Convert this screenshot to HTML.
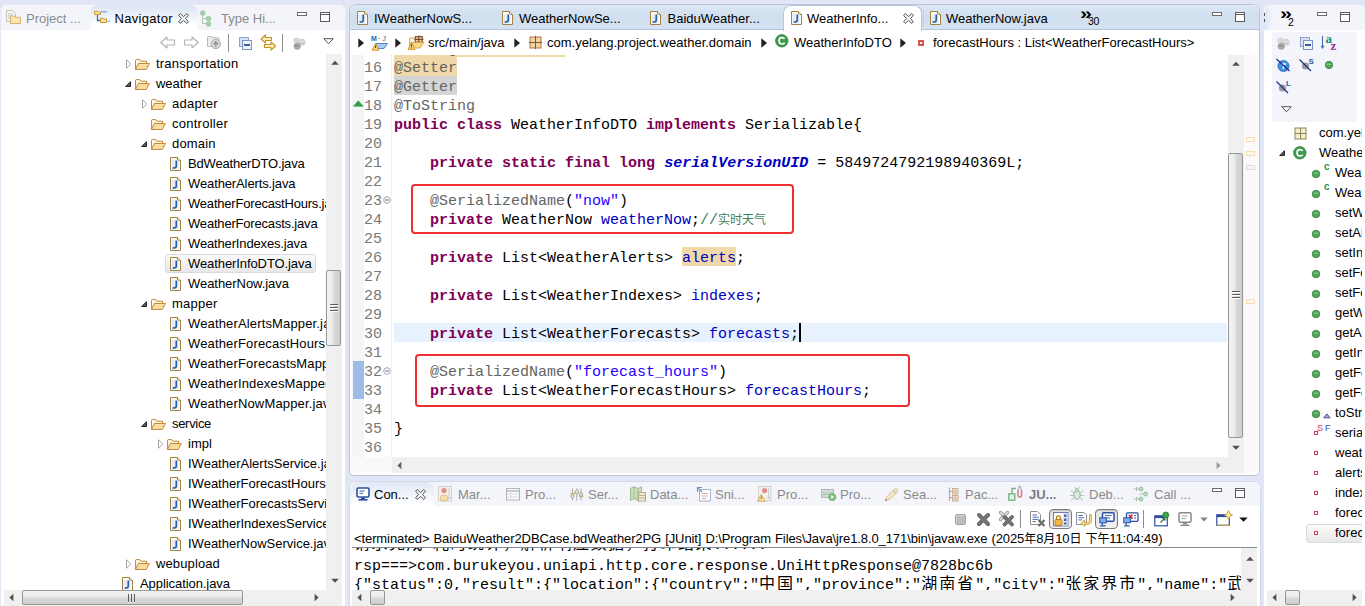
<!DOCTYPE html>
<html><head><meta charset="utf-8"><title>Eclipse</title>
<style>
html,body{margin:0;padding:0}
body{width:1365px;height:606px;overflow:hidden;position:relative;background:#e1e6f6;font-family:"Liberation Sans","Noto Sans CJK SC",sans-serif;font-size:13px;color:#000}
.i{position:absolute;overflow:visible}
.t{position:absolute;white-space:nowrap;line-height:16px;font-size:13px}
.g{color:#8a8a8a}
.panel{position:absolute;background:#fff;border:1px solid #c9cfe3;border-radius:7px 7px 0 0;box-sizing:border-box}
.tabbar{position:absolute;background:#f4f5fb;border-radius:6px 6px 0 0}
.atab{position:absolute;background:linear-gradient(#e9eff8,#fff);border-radius:8px 8px 0 0}
.sel{position:absolute;box-sizing:border-box;border:1px solid #dadada;border-radius:3px;background:linear-gradient(#fbfbfb,#e8e8e8)}
.m{position:absolute;white-space:pre;font-family:"Liberation Mono","Noto Sans CJK SC",monospace;font-size:15px;line-height:19px}
.trk{position:absolute;background:#f0f0f0}
.vth{position:absolute;box-sizing:border-box;border:1px solid #979797;border-radius:2px;background:linear-gradient(90deg,#f4f4f4 0%,#eaeaea 45%,#d8d8d8 55%,#cfcfcf 100%)}
.hth{position:absolute;box-sizing:border-box;border:1px solid #979797;border-radius:2px;background:linear-gradient(180deg,#f4f4f4 0%,#eaeaea 45%,#d8d8d8 55%,#cfcfcf 100%)}
.grip{position:absolute;background:#5c5c5c;box-shadow:0 1px 0 #fff}
.ln{color:#787878}
.k{color:#7f0055;font-weight:bold}
.f{color:#0000c0}
.sf{color:#0000c0;font-style:italic;font-weight:bold}
.s{color:#2a00ff}
.a{color:#646464}
.c{color:#3f7f5f}
.cj{font-family:"Noto Sans CJK SC",sans-serif;font-size:12px;line-height:0}
.rb{position:absolute;box-sizing:border-box;border:2px solid #ee3030;border-radius:4px}
.cc{font-family:"Noto Sans CJK SC",sans-serif;font-size:16px;letter-spacing:2px;line-height:0}

</style></head><body>
<div class="panel" style="left:0px;top:4px;width:346px;height:610px;border-color:#e4e7f3"></div>
<div class="tabbar" style="left:1px;top:5px;width:344px;height:25px"></div>
<div class="atab" style="left:90px;top:5px;width:108px;height:25px;background:linear-gradient(#d9e4f2,#eef3fa 45%,#fff 85%)"></div>
<svg class="i" style="left:5px;top:9px" width="17" height="17" viewBox="0 0 17 17" ><path d="M1.5 1.5H7.5L10.5 4.5V12.5H1.5Z" fill="#f4f4ee" stroke="#c9c4b0"/><path d="M3 5H8M3 7H8M3 9H6" stroke="#b9c6df" stroke-width="1"/><path d="M5.5 14.5V7.7C5.5 7.2 5.8 7 6.2 7H9.3L10.3 8.3H14.8C15.2 8.3 15.5 8.6 15.5 9V14.5Z" fill="#fbe7ae" stroke="#d6b071"/></svg>
<div class="t g" style="left:26px;top:11px">Project ...</div>
<svg class="i" style="left:94px;top:10px" width="16" height="14" viewBox="0 0 16 14" ><path d="M0.5 4.5V1.2H3L3.8 2H6.5V4.5Z" fill="#fbe39a" stroke="#c89a3a"/><path d="M3.5 5V10.5H6" fill="none" stroke="#4a69b5" stroke-width="1.3"/><path d="M7 1.8H13" stroke="#7da1e0" stroke-width="1.2"/><path d="M6.5 12.5V8.2H9L9.8 9H12.5V12.5Z" fill="#fbe39a" stroke="#c89a3a"/><path d="M13.5 11.3H16" stroke="#7da1e0" stroke-width="1.2"/></svg>
<div class="t" style="left:114.5px;top:11px;letter-spacing:0.3px">Navigator</div>
<svg class="i" style="left:178px;top:12.5px" width="11" height="11" viewBox="0 0 11 11" ><path d="M0.6 2.2L2.2 0.6L5.5 3.6L8.8 0.6L10.4 2.2L7.4 5.5L10.4 8.8L8.8 10.4L5.5 7.4L2.2 10.4L0.6 8.8L3.6 5.5Z" fill="#fff" stroke="#4a4a4a" stroke-width="1" stroke-linejoin="round"/></svg>
<svg class="i" style="left:200px;top:10px" width="12" height="18" viewBox="0 0 12 18" ><g opacity=".65"><path d="M2.5 4V13.5H7M2.5 8.5H7" fill="none" stroke="#9ab09a" stroke-width="1.2"/><circle cx="2.8" cy="3" r="2.2" fill="#7fc77f" stroke="#4f9a4f" stroke-width="0.8"/><circle cx="8.5" cy="8.5" r="2.2" fill="#7fc77f" stroke="#4f9a4f" stroke-width="0.8"/><circle cx="8.5" cy="14" r="2.2" fill="#7fc77f" stroke="#4f9a4f" stroke-width="0.8"/></g></svg>
<div class="t g" style="left:221px;top:11px">Type Hi...</div>
<div style="position:absolute;left:297px;top:12px;width:8px;height:2px;border:1px solid #6a6a6a;background:#fff;box-sizing:content-box"></div><div style="position:absolute;left:320px;top:12px;width:8px;height:8px;border:1px solid #5c5c5c;background:linear-gradient(#fff 0,#fff 1px,#5c5c5c 1px,#5c5c5c 2px,#fff 2px);box-sizing:content-box"></div>
<div style="position:absolute;left:1px;top:30px;width:344px;height:24px;background:#fff"></div>
<svg class="i" style="left:160px;top:36px" width="16" height="13" viewBox="0 0 16 13" ><path d="M0.8 6.5L7 1V4H14.5V9H7V12Z" fill="#fff" stroke="#b4b4b4" stroke-width="1.1" stroke-linejoin="round"/></svg>
<svg class="i" style="left:183px;top:36px" width="16" height="13" viewBox="0 0 16 13" ><path d="M15.2 6.5L9 1V4H1.5V9H9V12Z" fill="#fff" stroke="#b4b4b4" stroke-width="1.1" stroke-linejoin="round"/></svg>
<svg class="i" style="left:207px;top:35px" width="15" height="15" viewBox="0 0 15 15" ><path d="M0.5 11.5V2.2C0.5 1.8 0.8 1.5 1.2 1.5H4.5L5.6 2.8H11.2C11.6 2.8 12 3.1 12 3.5V11.5Z" fill="#ececec" stroke="#b9b9b9"/><circle cx="8.8" cy="9" r="4.6" fill="#d9d9d9" stroke="#aaa"/><path d="M8.8 12V8M6.6 9L8.8 6.3L11 9Z" fill="#8e8e8e" stroke="#8e8e8e" stroke-width="1"/></svg>
<div style="position:absolute;left:228px;top:34px;width:1px;height:18px;background:#8e8e8e"></div>
<svg class="i" style="left:238px;top:36px" width="15" height="15" viewBox="0 0 15 15" ><rect x="1.5" y="1.5" width="9" height="9" fill="#d6e1f1" stroke="#8da3cb"/><rect x="4.5" y="4.5" width="9" height="9" fill="#eef6f8" stroke="#7c93c0"/><path d="M6 9H12" stroke="#1d3f8f" stroke-width="1.7"/></svg>
<svg class="i" style="left:259px;top:34px" width="18" height="18" viewBox="0 0 18 18" ><path d="M2 5L6.5 1V3.5H12.5V6.5H6.5V9Z" fill="#fdf0c0" stroke="#c99222" stroke-width="1.1" stroke-linejoin="round"/><path d="M16.5 12L12 8V10.5H5.5V13.5H12V16Z" fill="#fdf0c0" stroke="#c99222" stroke-width="1.1" stroke-linejoin="round"/></svg>
<div style="position:absolute;left:282px;top:34px;width:1px;height:18px;background:#8e8e8e"></div>
<svg class="i" style="left:292px;top:36px" width="15" height="15" viewBox="0 0 15 15" ><circle cx="4.5" cy="4.6" r="3.2" fill="#d6d6d6"/><circle cx="10.2" cy="6.2" r="3.4" fill="#d0d0d0"/><circle cx="5.2" cy="10.2" r="3.5" fill="#a9a9a9"/><path d="M2.2 9.8H8.2" stroke="#8a8a8a" stroke-width="1"/><path d="M7.5 5.4H13" stroke="#e6e6e6" stroke-width="1"/></svg>
<svg class="i" style="left:323px;top:38px" width="11" height="7" viewBox="0 0 11 7" ><path d="M0.8 0.7H10.2L5.5 5.8Z" fill="#fff" stroke="#555" stroke-width="1"/></svg>
<div id="tree" style="position:absolute;left:2px;top:54px;width:324px;height:536px;overflow:hidden;background:#fff">
<svg class="i" style="left:124px;top:5px" width="6" height="10" viewBox="0 0 6 10" ><path d="M0.5 0.8L4.8 5L0.5 9.2Z" fill="#fff" stroke="#a6a6a6"/></svg>
<svg class="i" style="left:132px;top:4px" width="17" height="13" viewBox="0 0 17 13" ><path d="M1.5 11.5V2.5C1.5 1.9 1.9 1.5 2.5 1.5H5.6L6.9 3.2H12.5V5.5" fill="#fdf3dc" stroke="#c38b3c"/><path d="M1.5 11.5L4.4 5.5H15.4L12.2 11.5Z" fill="#f9dd9f" stroke="#c38b3c" stroke-linejoin="round"/></svg>
<div class="t" style="left:154px;top:2px;letter-spacing:0.21px">transportation</div>
<svg class="i" style="left:123px;top:27px" width="6" height="6" viewBox="0 0 6 6" ><path d="M5.5 0.7V5.5H0.7Z" fill="#595959" stroke="#262626"/></svg>
<svg class="i" style="left:132px;top:24px" width="17" height="13" viewBox="0 0 17 13" ><path d="M1.5 11.5V2.5C1.5 1.9 1.9 1.5 2.5 1.5H5.6L6.9 3.2H12.5V5.5" fill="#fdf3dc" stroke="#c38b3c"/><path d="M1.5 11.5L4.4 5.5H15.4L12.2 11.5Z" fill="#f9dd9f" stroke="#c38b3c" stroke-linejoin="round"/></svg>
<div class="t" style="left:154px;top:22px;letter-spacing:-0.04px">weather</div>
<svg class="i" style="left:140px;top:45px" width="6" height="10" viewBox="0 0 6 10" ><path d="M0.5 0.8L4.8 5L0.5 9.2Z" fill="#fff" stroke="#a6a6a6"/></svg>
<svg class="i" style="left:148px;top:44px" width="17" height="13" viewBox="0 0 17 13" ><path d="M1.5 11.5V2.5C1.5 1.9 1.9 1.5 2.5 1.5H5.6L6.9 3.2H12.5V5.5" fill="#fdf3dc" stroke="#c38b3c"/><path d="M1.5 11.5L4.4 5.5H15.4L12.2 11.5Z" fill="#f9dd9f" stroke="#c38b3c" stroke-linejoin="round"/></svg>
<div class="t" style="left:170px;top:42px;letter-spacing:0.23px">adapter</div>
<svg class="i" style="left:148px;top:64px" width="17" height="13" viewBox="0 0 17 13" ><path d="M1.5 11.5V2.5C1.5 1.9 1.9 1.5 2.5 1.5H5.6L6.9 3.2H12.5V5.5" fill="#fdf3dc" stroke="#c38b3c"/><path d="M1.5 11.5L4.4 5.5H15.4L12.2 11.5Z" fill="#f9dd9f" stroke="#c38b3c" stroke-linejoin="round"/></svg>
<div class="t" style="left:170px;top:62px;letter-spacing:0.25px">controller</div>
<svg class="i" style="left:139px;top:87px" width="6" height="6" viewBox="0 0 6 6" ><path d="M5.5 0.7V5.5H0.7Z" fill="#595959" stroke="#262626"/></svg>
<svg class="i" style="left:148px;top:84px" width="17" height="13" viewBox="0 0 17 13" ><path d="M1.5 11.5V2.5C1.5 1.9 1.9 1.5 2.5 1.5H5.6L6.9 3.2H12.5V5.5" fill="#fdf3dc" stroke="#c38b3c"/><path d="M1.5 11.5L4.4 5.5H15.4L12.2 11.5Z" fill="#f9dd9f" stroke="#c38b3c" stroke-linejoin="round"/></svg>
<div class="t" style="left:170px;top:82px;letter-spacing:0.17px">domain</div>
<svg class="i" style="left:168px;top:103px" width="11" height="14" viewBox="0 0 11 14" ><path d="M0.5 0.5H7.5L10.5 3.5V13.5H0.5Z" fill="#fdfdf6" stroke="#a08440"/><path d="M7.5 0.5V3.5H10.5" fill="#f3e6b8" stroke="#a08440"/><rect x="1.5" y="3" width="7" height="9.5" fill="#e4ecf8"/><path d="M6.3 3.6V8.8C6.3 10.4 5.4 11 4.2 11C3.5 11 3 10.8 2.7 10.6" fill="none" stroke="#2a5caa" stroke-width="1.7"/></svg>
<div class="t" style="left:186px;top:102px;letter-spacing:-0.17px">BdWeatherDTO.java</div>
<svg class="i" style="left:168px;top:123px" width="11" height="14" viewBox="0 0 11 14" ><path d="M0.5 0.5H7.5L10.5 3.5V13.5H0.5Z" fill="#fdfdf6" stroke="#a08440"/><path d="M7.5 0.5V3.5H10.5" fill="#f3e6b8" stroke="#a08440"/><rect x="1.5" y="3" width="7" height="9.5" fill="#e4ecf8"/><path d="M6.3 3.6V8.8C6.3 10.4 5.4 11 4.2 11C3.5 11 3 10.8 2.7 10.6" fill="none" stroke="#2a5caa" stroke-width="1.7"/></svg>
<div class="t" style="left:186px;top:122px;letter-spacing:-0.12px">WeatherAlerts.java</div>
<svg class="i" style="left:168px;top:143px" width="11" height="14" viewBox="0 0 11 14" ><path d="M0.5 0.5H7.5L10.5 3.5V13.5H0.5Z" fill="#fdfdf6" stroke="#a08440"/><path d="M7.5 0.5V3.5H10.5" fill="#f3e6b8" stroke="#a08440"/><rect x="1.5" y="3" width="7" height="9.5" fill="#e4ecf8"/><path d="M6.3 3.6V8.8C6.3 10.4 5.4 11 4.2 11C3.5 11 3 10.8 2.7 10.6" fill="none" stroke="#2a5caa" stroke-width="1.7"/></svg>
<div class="t" style="left:186px;top:142px;letter-spacing:-0.20px">WeatherForecastHours.java</div>
<svg class="i" style="left:168px;top:163px" width="11" height="14" viewBox="0 0 11 14" ><path d="M0.5 0.5H7.5L10.5 3.5V13.5H0.5Z" fill="#fdfdf6" stroke="#a08440"/><path d="M7.5 0.5V3.5H10.5" fill="#f3e6b8" stroke="#a08440"/><rect x="1.5" y="3" width="7" height="9.5" fill="#e4ecf8"/><path d="M6.3 3.6V8.8C6.3 10.4 5.4 11 4.2 11C3.5 11 3 10.8 2.7 10.6" fill="none" stroke="#2a5caa" stroke-width="1.7"/></svg>
<div class="t" style="left:186px;top:162px;letter-spacing:-0.19px">WeatherForecasts.java</div>
<svg class="i" style="left:168px;top:183px" width="11" height="14" viewBox="0 0 11 14" ><path d="M0.5 0.5H7.5L10.5 3.5V13.5H0.5Z" fill="#fdfdf6" stroke="#a08440"/><path d="M7.5 0.5V3.5H10.5" fill="#f3e6b8" stroke="#a08440"/><rect x="1.5" y="3" width="7" height="9.5" fill="#e4ecf8"/><path d="M6.3 3.6V8.8C6.3 10.4 5.4 11 4.2 11C3.5 11 3 10.8 2.7 10.6" fill="none" stroke="#2a5caa" stroke-width="1.7"/></svg>
<div class="t" style="left:186px;top:182px;letter-spacing:-0.15px">WeatherIndexes.java</div>
<div class="sel" style="left:163px;top:200px;width:151px;height:19px"></div>
<svg class="i" style="left:168px;top:203px" width="11" height="14" viewBox="0 0 11 14" ><path d="M0.5 0.5H7.5L10.5 3.5V13.5H0.5Z" fill="#fdfdf6" stroke="#a08440"/><path d="M7.5 0.5V3.5H10.5" fill="#f3e6b8" stroke="#a08440"/><rect x="1.5" y="3" width="7" height="9.5" fill="#e4ecf8"/><path d="M6.3 3.6V8.8C6.3 10.4 5.4 11 4.2 11C3.5 11 3 10.8 2.7 10.6" fill="none" stroke="#2a5caa" stroke-width="1.7"/></svg>
<div class="t" style="left:186px;top:202px;letter-spacing:-0.09px">WeatherInfoDTO.java</div>
<svg class="i" style="left:168px;top:223px" width="11" height="14" viewBox="0 0 11 14" ><path d="M0.5 0.5H7.5L10.5 3.5V13.5H0.5Z" fill="#fdfdf6" stroke="#a08440"/><path d="M7.5 0.5V3.5H10.5" fill="#f3e6b8" stroke="#a08440"/><rect x="1.5" y="3" width="7" height="9.5" fill="#e4ecf8"/><path d="M6.3 3.6V8.8C6.3 10.4 5.4 11 4.2 11C3.5 11 3 10.8 2.7 10.6" fill="none" stroke="#2a5caa" stroke-width="1.7"/></svg>
<div class="t" style="left:186px;top:222px;letter-spacing:-0.05px">WeatherNow.java</div>
<svg class="i" style="left:139px;top:247px" width="6" height="6" viewBox="0 0 6 6" ><path d="M5.5 0.7V5.5H0.7Z" fill="#595959" stroke="#262626"/></svg>
<svg class="i" style="left:148px;top:244px" width="17" height="13" viewBox="0 0 17 13" ><path d="M1.5 11.5V2.5C1.5 1.9 1.9 1.5 2.5 1.5H5.6L6.9 3.2H12.5V5.5" fill="#fdf3dc" stroke="#c38b3c"/><path d="M1.5 11.5L4.4 5.5H15.4L12.2 11.5Z" fill="#f9dd9f" stroke="#c38b3c" stroke-linejoin="round"/></svg>
<div class="t" style="left:170px;top:242px;letter-spacing:0.27px">mapper</div>
<svg class="i" style="left:168px;top:263px" width="11" height="14" viewBox="0 0 11 14" ><path d="M0.5 0.5H7.5L10.5 3.5V13.5H0.5Z" fill="#fdfdf6" stroke="#a08440"/><path d="M7.5 0.5V3.5H10.5" fill="#f3e6b8" stroke="#a08440"/><rect x="1.5" y="3" width="7" height="9.5" fill="#e4ecf8"/><path d="M6.3 3.6V8.8C6.3 10.4 5.4 11 4.2 11C3.5 11 3 10.8 2.7 10.6" fill="none" stroke="#2a5caa" stroke-width="1.7"/></svg>
<div class="t" style="left:186px;top:262px;letter-spacing:0.15px">WeatherAlertsMapper.java</div>
<svg class="i" style="left:168px;top:283px" width="11" height="14" viewBox="0 0 11 14" ><path d="M0.5 0.5H7.5L10.5 3.5V13.5H0.5Z" fill="#fdfdf6" stroke="#a08440"/><path d="M7.5 0.5V3.5H10.5" fill="#f3e6b8" stroke="#a08440"/><rect x="1.5" y="3" width="7" height="9.5" fill="#e4ecf8"/><path d="M6.3 3.6V8.8C6.3 10.4 5.4 11 4.2 11C3.5 11 3 10.8 2.7 10.6" fill="none" stroke="#2a5caa" stroke-width="1.7"/></svg>
<div class="t" style="left:186px;top:282px;letter-spacing:0.15px">WeatherForecastHoursMapper.java</div>
<svg class="i" style="left:168px;top:303px" width="11" height="14" viewBox="0 0 11 14" ><path d="M0.5 0.5H7.5L10.5 3.5V13.5H0.5Z" fill="#fdfdf6" stroke="#a08440"/><path d="M7.5 0.5V3.5H10.5" fill="#f3e6b8" stroke="#a08440"/><rect x="1.5" y="3" width="7" height="9.5" fill="#e4ecf8"/><path d="M6.3 3.6V8.8C6.3 10.4 5.4 11 4.2 11C3.5 11 3 10.8 2.7 10.6" fill="none" stroke="#2a5caa" stroke-width="1.7"/></svg>
<div class="t" style="left:186px;top:302px;letter-spacing:0.15px">WeatherForecastsMapper.java</div>
<svg class="i" style="left:168px;top:323px" width="11" height="14" viewBox="0 0 11 14" ><path d="M0.5 0.5H7.5L10.5 3.5V13.5H0.5Z" fill="#fdfdf6" stroke="#a08440"/><path d="M7.5 0.5V3.5H10.5" fill="#f3e6b8" stroke="#a08440"/><rect x="1.5" y="3" width="7" height="9.5" fill="#e4ecf8"/><path d="M6.3 3.6V8.8C6.3 10.4 5.4 11 4.2 11C3.5 11 3 10.8 2.7 10.6" fill="none" stroke="#2a5caa" stroke-width="1.7"/></svg>
<div class="t" style="left:186px;top:322px;letter-spacing:0.15px">WeatherIndexesMapper.java</div>
<svg class="i" style="left:168px;top:343px" width="11" height="14" viewBox="0 0 11 14" ><path d="M0.5 0.5H7.5L10.5 3.5V13.5H0.5Z" fill="#fdfdf6" stroke="#a08440"/><path d="M7.5 0.5V3.5H10.5" fill="#f3e6b8" stroke="#a08440"/><rect x="1.5" y="3" width="7" height="9.5" fill="#e4ecf8"/><path d="M6.3 3.6V8.8C6.3 10.4 5.4 11 4.2 11C3.5 11 3 10.8 2.7 10.6" fill="none" stroke="#2a5caa" stroke-width="1.7"/></svg>
<div class="t" style="left:186px;top:342px;letter-spacing:0.15px">WeatherNowMapper.java</div>
<svg class="i" style="left:139px;top:367px" width="6" height="6" viewBox="0 0 6 6" ><path d="M5.5 0.7V5.5H0.7Z" fill="#595959" stroke="#262626"/></svg>
<svg class="i" style="left:148px;top:364px" width="17" height="13" viewBox="0 0 17 13" ><path d="M1.5 11.5V2.5C1.5 1.9 1.9 1.5 2.5 1.5H5.6L6.9 3.2H12.5V5.5" fill="#fdf3dc" stroke="#c38b3c"/><path d="M1.5 11.5L4.4 5.5H15.4L12.2 11.5Z" fill="#f9dd9f" stroke="#c38b3c" stroke-linejoin="round"/></svg>
<div class="t" style="left:170px;top:362px;letter-spacing:-0.31px">service</div>
<svg class="i" style="left:156px;top:385px" width="6" height="10" viewBox="0 0 6 10" ><path d="M0.5 0.8L4.8 5L0.5 9.2Z" fill="#fff" stroke="#a6a6a6"/></svg>
<svg class="i" style="left:164px;top:384px" width="17" height="13" viewBox="0 0 17 13" ><path d="M1.5 11.5V2.5C1.5 1.9 1.9 1.5 2.5 1.5H5.6L6.9 3.2H12.5V5.5" fill="#fdf3dc" stroke="#c38b3c"/><path d="M1.5 11.5L4.4 5.5H15.4L12.2 11.5Z" fill="#f9dd9f" stroke="#c38b3c" stroke-linejoin="round"/></svg>
<div class="t" style="left:186px;top:382px;letter-spacing:0.05px">impl</div>
<svg class="i" style="left:168px;top:403px" width="11" height="14" viewBox="0 0 11 14" ><path d="M0.5 0.5H7.5L10.5 3.5V13.5H0.5Z" fill="#fdfdf6" stroke="#a08440"/><path d="M7.5 0.5V3.5H10.5" fill="#f3e6b8" stroke="#a08440"/><rect x="1.5" y="3" width="7" height="9.5" fill="#e4ecf8"/><path d="M6.3 3.6V8.8C6.3 10.4 5.4 11 4.2 11C3.5 11 3 10.8 2.7 10.6" fill="none" stroke="#2a5caa" stroke-width="1.7"/></svg>
<div class="t" style="left:186px;top:402px;letter-spacing:0.00px">IWeatherAlertsService.java</div>
<svg class="i" style="left:168px;top:423px" width="11" height="14" viewBox="0 0 11 14" ><path d="M0.5 0.5H7.5L10.5 3.5V13.5H0.5Z" fill="#fdfdf6" stroke="#a08440"/><path d="M7.5 0.5V3.5H10.5" fill="#f3e6b8" stroke="#a08440"/><rect x="1.5" y="3" width="7" height="9.5" fill="#e4ecf8"/><path d="M6.3 3.6V8.8C6.3 10.4 5.4 11 4.2 11C3.5 11 3 10.8 2.7 10.6" fill="none" stroke="#2a5caa" stroke-width="1.7"/></svg>
<div class="t" style="left:186px;top:422px;letter-spacing:0.00px">IWeatherForecastHoursService.java</div>
<svg class="i" style="left:168px;top:443px" width="11" height="14" viewBox="0 0 11 14" ><path d="M0.5 0.5H7.5L10.5 3.5V13.5H0.5Z" fill="#fdfdf6" stroke="#a08440"/><path d="M7.5 0.5V3.5H10.5" fill="#f3e6b8" stroke="#a08440"/><rect x="1.5" y="3" width="7" height="9.5" fill="#e4ecf8"/><path d="M6.3 3.6V8.8C6.3 10.4 5.4 11 4.2 11C3.5 11 3 10.8 2.7 10.6" fill="none" stroke="#2a5caa" stroke-width="1.7"/></svg>
<div class="t" style="left:186px;top:442px;letter-spacing:0.00px">IWeatherForecastsService.java</div>
<svg class="i" style="left:168px;top:463px" width="11" height="14" viewBox="0 0 11 14" ><path d="M0.5 0.5H7.5L10.5 3.5V13.5H0.5Z" fill="#fdfdf6" stroke="#a08440"/><path d="M7.5 0.5V3.5H10.5" fill="#f3e6b8" stroke="#a08440"/><rect x="1.5" y="3" width="7" height="9.5" fill="#e4ecf8"/><path d="M6.3 3.6V8.8C6.3 10.4 5.4 11 4.2 11C3.5 11 3 10.8 2.7 10.6" fill="none" stroke="#2a5caa" stroke-width="1.7"/></svg>
<div class="t" style="left:186px;top:462px;letter-spacing:0.00px">IWeatherIndexesService.java</div>
<svg class="i" style="left:168px;top:483px" width="11" height="14" viewBox="0 0 11 14" ><path d="M0.5 0.5H7.5L10.5 3.5V13.5H0.5Z" fill="#fdfdf6" stroke="#a08440"/><path d="M7.5 0.5V3.5H10.5" fill="#f3e6b8" stroke="#a08440"/><rect x="1.5" y="3" width="7" height="9.5" fill="#e4ecf8"/><path d="M6.3 3.6V8.8C6.3 10.4 5.4 11 4.2 11C3.5 11 3 10.8 2.7 10.6" fill="none" stroke="#2a5caa" stroke-width="1.7"/></svg>
<div class="t" style="left:186px;top:482px;letter-spacing:0.00px">IWeatherNowService.java</div>
<svg class="i" style="left:124px;top:505px" width="6" height="10" viewBox="0 0 6 10" ><path d="M0.5 0.8L4.8 5L0.5 9.2Z" fill="#fff" stroke="#a6a6a6"/></svg>
<svg class="i" style="left:132px;top:504px" width="17" height="13" viewBox="0 0 17 13" ><path d="M1.5 11.5V2.5C1.5 1.9 1.9 1.5 2.5 1.5H5.6L6.9 3.2H12.5V5.5" fill="#fdf3dc" stroke="#c38b3c"/><path d="M1.5 11.5L4.4 5.5H15.4L12.2 11.5Z" fill="#f9dd9f" stroke="#c38b3c" stroke-linejoin="round"/></svg>
<div class="t" style="left:154px;top:502px;letter-spacing:0.12px">webupload</div>
<svg class="i" style="left:120px;top:523px" width="11" height="14" viewBox="0 0 11 14" ><path d="M0.5 0.5H7.5L10.5 3.5V13.5H0.5Z" fill="#fdfdf6" stroke="#a08440"/><path d="M7.5 0.5V3.5H10.5" fill="#f3e6b8" stroke="#a08440"/><rect x="1.5" y="3" width="7" height="9.5" fill="#e4ecf8"/><path d="M6.3 3.6V8.8C6.3 10.4 5.4 11 4.2 11C3.5 11 3 10.8 2.7 10.6" fill="none" stroke="#2a5caa" stroke-width="1.7"/></svg>
<div class="t" style="left:138px;top:522px;letter-spacing:-0.07px">Application.java</div>
</div>
<div class="trk" style="left:326px;top:54px;width:16px;height:536px"></div>
<svg class="i" style="left:331px;top:59px" width="8" height="7" viewBox="0 0 8 7" ><path d="M0.2 5.8L4 1.7L7.8 5.8Z" fill="#505050"/></svg>
<svg class="i" style="left:331px;top:577px" width="8" height="7" viewBox="0 0 8 7" ><path d="M0.2 1.7L4 5.8L7.8 1.7Z" fill="#505050"/></svg>
<div class="vth" style="left:326px;top:270px;width:15px;height:76px"></div><div class="grip" style="left:330px;top:304px;width:8px;height:1px"></div><div class="grip" style="left:330px;top:307px;width:8px;height:1px"></div><div class="grip" style="left:330px;top:310px;width:8px;height:1px"></div>
<div class="trk" style="left:4px;top:590px;width:322px;height:16px"></div><div style="position:absolute;left:326px;top:590px;width:16px;height:16px;background:#f0f0f0"></div>
<svg class="i" style="left:8px;top:594px" width="8" height="7" viewBox="0 0 8 7" ><path d="M5.4 -0.3L1.4 3.5L5.4 7.3Z" fill="#505050"/></svg>
<svg class="i" style="left:313px;top:594px" width="8" height="7" viewBox="0 0 8 7" ><path d="M1.6 -0.3L5.6 3.5L1.6 7.3Z" fill="#505050"/></svg>
<div class="hth" style="left:22px;top:590px;width:221px;height:15px"></div><div class="grip" style="left:128px;top:594px;width:1px;height:8px"></div><div class="grip" style="left:131px;top:594px;width:1px;height:8px"></div><div class="grip" style="left:134px;top:594px;width:1px;height:8px"></div>
<div class="panel" style="left:349px;top:4px;width:911px;height:472px;border-radius:7px 7px 5px 5px;border-color:#bfc4d4"></div>
<div class="tabbar" style="left:350px;top:5px;width:909px;height:25px;background:linear-gradient(#dbe7f5,#d1dfef 45%,#d3e1f1);border-bottom:1px solid #b9c4dc;box-sizing:border-box;border-radius:6px 6px 0 0"></div>
<div style="position:absolute;left:783px;top:5px;width:139px;height:26px;background:#fff;border:1px solid #b9c4dc;border-bottom:none;border-radius:8px 8px 0 0;box-sizing:border-box"></div>
<svg class="i" style="left:357px;top:11px" width="11" height="14" viewBox="0 0 11 14" ><path d="M0.5 0.5H7.5L10.5 3.5V13.5H0.5Z" fill="#fdfdf6" stroke="#a08440"/><path d="M7.5 0.5V3.5H10.5" fill="#f3e6b8" stroke="#a08440"/><rect x="1.5" y="3" width="7" height="9.5" fill="#e4ecf8"/><path d="M6.3 3.6V8.8C6.3 10.4 5.4 11 4.2 11C3.5 11 3 10.8 2.7 10.6" fill="none" stroke="#2a5caa" stroke-width="1.7"/></svg>
<div class="t" style="left:374px;top:11px">IWeatherNowS...</div>
<svg class="i" style="left:502px;top:11px" width="11" height="14" viewBox="0 0 11 14" ><path d="M0.5 0.5H7.5L10.5 3.5V13.5H0.5Z" fill="#fdfdf6" stroke="#a08440"/><path d="M7.5 0.5V3.5H10.5" fill="#f3e6b8" stroke="#a08440"/><rect x="1.5" y="3" width="7" height="9.5" fill="#e4ecf8"/><path d="M6.3 3.6V8.8C6.3 10.4 5.4 11 4.2 11C3.5 11 3 10.8 2.7 10.6" fill="none" stroke="#2a5caa" stroke-width="1.7"/></svg>
<div class="t" style="left:519px;top:11px">WeatherNowSe...</div>
<svg class="i" style="left:650px;top:11px" width="11" height="14" viewBox="0 0 11 14" ><path d="M0.5 0.5H7.5L10.5 3.5V13.5H0.5Z" fill="#fdfdf6" stroke="#a08440"/><path d="M7.5 0.5V3.5H10.5" fill="#f3e6b8" stroke="#a08440"/><rect x="1.5" y="3" width="7" height="9.5" fill="#e4ecf8"/><path d="M6.3 3.6V8.8C6.3 10.4 5.4 11 4.2 11C3.5 11 3 10.8 2.7 10.6" fill="none" stroke="#2a5caa" stroke-width="1.7"/></svg>
<div class="t" style="left:667.5px;top:11px">BaiduWeather...</div>
<svg class="i" style="left:790.5px;top:11px" width="11" height="14" viewBox="0 0 11 14" ><path d="M0.5 0.5H7.5L10.5 3.5V13.5H0.5Z" fill="#fdfdf6" stroke="#a08440"/><path d="M7.5 0.5V3.5H10.5" fill="#f3e6b8" stroke="#a08440"/><rect x="1.5" y="3" width="7" height="9.5" fill="#e4ecf8"/><path d="M6.3 3.6V8.8C6.3 10.4 5.4 11 4.2 11C3.5 11 3 10.8 2.7 10.6" fill="none" stroke="#2a5caa" stroke-width="1.7"/></svg>
<div class="t" style="left:807px;top:11px">WeatherInfo...</div>
<svg class="i" style="left:903px;top:13px" width="11" height="11" viewBox="0 0 11 11" ><path d="M0.6 2.2L2.2 0.6L5.5 3.6L8.8 0.6L10.4 2.2L7.4 5.5L10.4 8.8L8.8 10.4L5.5 7.4L2.2 10.4L0.6 8.8L3.6 5.5Z" fill="#fff" stroke="#4a4a4a" stroke-width="1" stroke-linejoin="round"/></svg>
<div style="position:absolute;left:923px;top:9px;width:1px;height:18px;background:#c4cede"></div>
<svg class="i" style="left:929.5px;top:11px" width="11" height="14" viewBox="0 0 11 14" ><path d="M0.5 0.5H7.5L10.5 3.5V13.5H0.5Z" fill="#fdfdf6" stroke="#a08440"/><path d="M7.5 0.5V3.5H10.5" fill="#f3e6b8" stroke="#a08440"/><rect x="1.5" y="3" width="7" height="9.5" fill="#e4ecf8"/><path d="M6.3 3.6V8.8C6.3 10.4 5.4 11 4.2 11C3.5 11 3 10.8 2.7 10.6" fill="none" stroke="#2a5caa" stroke-width="1.7"/></svg>
<div class="t" style="left:946px;top:11px">WeatherNow.java</div>
<div class="t" style="left:1080px;top:6px;font-size:16px;font-weight:bold;transform:scaleX(1.35);transform-origin:0 0">»</div>
<div class="t" style="left:1088px;top:13px;font-size:10.5px;letter-spacing:-0.3px">30</div>
<div style="position:absolute;left:1212px;top:12px;width:8px;height:2px;border:1px solid #6a6a6a;background:#fff;box-sizing:content-box"></div><div style="position:absolute;left:1235px;top:12px;width:8px;height:8px;border:1px solid #5c5c5c;background:linear-gradient(#fff 0,#fff 1px,#5c5c5c 1px,#5c5c5c 2px,#fff 2px);box-sizing:content-box"></div>
<svg class="i" style="left:357.5px;top:38px" width="7" height="10" viewBox="0 0 7 10" ><path d="M0.3 0.2L6 5L0.3 9.8Z" fill="#222"/></svg>
<svg class="i" style="left:371px;top:34px" width="18" height="17" viewBox="0 0 18 17" ><text x="0" y="6.5" font-family="Liberation Sans,sans-serif" font-size="7" font-weight="bold" fill="#2c5aa8">M</text><text x="11" y="7" font-family="Liberation Sans,sans-serif" font-size="8" fill="#3b6cc0">J</text><path d="M7 4.5H9" stroke="#d9a63a" stroke-width="1.2"/><path d="M4.5 9.5H16.5L13 14.5H6.5Z" fill="#a9cdf2" stroke="#4a78c2" stroke-width="0.9"/><path d="M4.5 9.5L8 16.2H1Z" fill="#fad57c" stroke="#c98f24" stroke-width="0.9" stroke-linejoin="round"/><path d="M4.5 11.6V14" stroke="#5a3c05" stroke-width="1"/></svg>
<svg class="i" style="left:394.5px;top:38px" width="7" height="10" viewBox="0 0 7 10" ><path d="M0.3 0.2L6 5L0.3 9.8Z" fill="#222"/></svg>
<svg class="i" style="left:407px;top:34px" width="18" height="17" viewBox="0 0 18 17" ><path d="M2.5 13.5V5C2.5 4.3 3 3.8 3.6 3.8H6.6L7.6 5H9" fill="#fcf0d0" stroke="#dba85c" stroke-width="1"/><rect x="8.3" y="2.6" width="7" height="5.6" fill="#f4d489" stroke="#7a4a3a" stroke-width="1.1"/><path d="M11.8 1.6V8.2M7.4 5.4H16.4" stroke="#7a4a3a" stroke-width="1.1"/><path d="M5.2 8.5H17L13 14H2.5Z" fill="#f7d98a" stroke="#dba85c" stroke-width="1" stroke-linejoin="round"/><path d="M4.4 8.2L7.8 15.4H1Z" fill="#fad77e" stroke="#d79a2e" stroke-width="1" stroke-linejoin="round"/><path d="M4.4 10.4V12.6M4.4 13.4V14.3" stroke="#4a3205" stroke-width="1"/></svg>
<div class="t" style="left:428px;top:35px">src/main/java</div>
<svg class="i" style="left:513.7px;top:38px" width="7" height="10" viewBox="0 0 7 10" ><path d="M0.3 0.2L6 5L0.3 9.8Z" fill="#222"/></svg>
<svg class="i" style="left:528px;top:35px" width="15" height="15" viewBox="0 0 15 15" ><rect x="2" y="2" width="11" height="11" fill="#ecd59c" stroke="#b9774c" stroke-width="1"/><path d="M7.5 0.8V14.2M0.8 7.5H14.2" stroke="#86543a" stroke-width="1"/></svg>
<div class="t" style="left:547px;top:35px">com.yelang.project.weather.domain</div>
<svg class="i" style="left:760.7px;top:38px" width="7" height="10" viewBox="0 0 7 10" ><path d="M0.3 0.2L6 5L0.3 9.8Z" fill="#222"/></svg>
<svg class="i" style="left:775px;top:34px" width="14" height="14" viewBox="0 0 14 14" ><circle cx="6.8" cy="6.8" r="6.2" fill="#3f9a50" stroke="#2b7a3b" stroke-width="0.8"/><path d="M9.6 4.9C9 4 8.1 3.6 7 3.6C5.2 3.6 4 4.9 4 6.8C4 8.7 5.2 10 7 10C8.1 10 9 9.6 9.6 8.7" fill="none" stroke="#fff" stroke-width="1.6"/></svg>
<div class="t" style="left:794px;top:35px">WeatherInfoDTO</div>
<svg class="i" style="left:900px;top:38px" width="7" height="10" viewBox="0 0 7 10" ><path d="M0.3 0.2L6 5L0.3 9.8Z" fill="#222"/></svg>
<div style="position:absolute;left:918px;top:40px;width:2px;height:2px;border:2px solid #d9534f;background:#fff"></div>
<div class="t" style="left:933px;top:35px">forecastHours : List&lt;WeatherForecastHours&gt;</div>
<div id="code" style="position:absolute;left:350px;top:55px;width:878px;height:402px;overflow:hidden;background:#fff">
<div style="position:absolute;left:2px;top:0;width:12px;height:402px;background:#f5f5f5"></div>
<div style="position:absolute;left:41px;top:0;width:1px;height:402px;background:#f0f0f0"></div>
<div style="position:absolute;left:44px;top:-17px;width:171px;height:19px;background:#f0d8a8"></div>
<div style="position:absolute;left:44px;top:2px;width:63px;height:19px;background:#f0d8a8"></div>
<div style="position:absolute;left:44px;top:21px;width:63px;height:19px;background:#d4d4d4"></div>
<div style="position:absolute;left:332px;top:192px;width:54px;height:19px;background:#f0d8a8"></div>
<div style="position:absolute;left:44px;top:268px;width:833px;height:19px;background:#e8f2fe"></div>
<div class="m" style="left:44px;top:-15px"><span class="a">@AllArgsConstructor</span></div>
<div class="m ln" style="left:14px;top:4px">16</div>
<div class="m" style="left:44px;top:4px"><span class="a">@Setter</span></div>
<div class="m ln" style="left:14px;top:23px">17</div>
<div class="m" style="left:44px;top:23px"><span class="a">@Getter</span></div>
<div class="m ln" style="left:14px;top:42px">18</div>
<div class="m" style="left:44px;top:42px"><span class="a">@ToString</span></div>
<div class="m ln" style="left:14px;top:61px">19</div>
<div class="m" style="left:44px;top:61px"><b class="k">public</b> <b class="k">class</b> WeatherInfoDTO <b class="k">implements</b> Serializable{</div>
<div class="m ln" style="left:14px;top:80px">20</div>
<div class="m ln" style="left:14px;top:99px">21</div>
<div class="m" style="left:44px;top:99px">    <b class="k">private</b> <b class="k">static</b> <b class="k">final</b> <b class="k">long</b> <b class="sf">serialVersionUID</b> = 5849724792198940369L;</div>
<div class="m ln" style="left:14px;top:118px">22</div>
<div class="m ln" style="left:14px;top:137px">23</div>
<div class="m" style="left:44px;top:137px">    <span class="a">@SerializedName</span>(<span class="s">"now"</span>)</div>
<div class="m ln" style="left:14px;top:156px">24</div>
<div class="m" style="left:44px;top:156px">    <b class="k">private</b> WeatherNow <span class="f">weatherNow</span>;<span class="c">//<span class="cj">实时天气</span></span></div>
<div class="m ln" style="left:14px;top:175px">25</div>
<div class="m ln" style="left:14px;top:194px">26</div>
<div class="m" style="left:44px;top:194px">    <b class="k">private</b> List&lt;WeatherAlerts&gt; <span class="f">alerts</span>;</div>
<div class="m ln" style="left:14px;top:213px">27</div>
<div class="m ln" style="left:14px;top:232px">28</div>
<div class="m" style="left:44px;top:232px">    <b class="k">private</b> List&lt;WeatherIndexes&gt; <span class="f">indexes</span>;</div>
<div class="m ln" style="left:14px;top:251px">29</div>
<div class="m ln" style="left:14px;top:270px">30</div>
<div class="m" style="left:44px;top:270px">    <b class="k">private</b> List&lt;WeatherForecasts&gt; <span class="f">forecasts</span>;</div>
<div class="m ln" style="left:14px;top:289px">31</div>
<div class="m ln" style="left:14px;top:308px">32</div>
<div class="m" style="left:44px;top:308px">    <span class="a">@SerializedName</span>(<span class="s">"forecast_hours"</span>)</div>
<div class="m ln" style="left:14px;top:327px">33</div>
<div class="m" style="left:44px;top:327px">    <b class="k">private</b> List&lt;WeatherForecastHours&gt; <span class="f">forecastHours</span>;</div>
<div class="m ln" style="left:14px;top:346px">34</div>
<div class="m ln" style="left:14px;top:365px">35</div>
<div class="m" style="left:44px;top:365px">}</div>
<div class="m ln" style="left:14px;top:384px">36</div>
<div style="position:absolute;left:449px;top:268px;width:2px;height:19px;background:#000"></div>
<svg class="i" style="left:3px;top:45px" width="11" height="7" viewBox="0 0 11 7" ><path d="M0.5 6.2L5.3 0.8L10.2 6.2Z" fill="#2f9e44" stroke="#2f9e44" stroke-width="0.6" stroke-linejoin="round"/></svg>
<svg class="i" style="left:33px;top:141px" width="8" height="8" viewBox="0 0 8 8" ><circle cx="4" cy="4" r="3.3" fill="#fff" stroke="#8e9aa8" stroke-width="0.9"/><path d="M2.2 4H5.8" stroke="#5b6b7f" stroke-width="1"/></svg>
<svg class="i" style="left:33px;top:312px" width="8" height="8" viewBox="0 0 8 8" ><circle cx="4" cy="4" r="3.3" fill="#fff" stroke="#8e9aa8" stroke-width="0.9"/><path d="M2.2 4H5.8" stroke="#5b6b7f" stroke-width="1"/></svg>
<div style="position:absolute;left:3px;top:306px;width:11px;height:38px;background-color:#6f9bd8;background-image:radial-gradient(#cfe0f6 0.6px,transparent 0.8px);background-size:2px 2px"></div>
<div class="rb" style="left:60.5px;top:128.5px;width:383px;height:50px"></div>
<div class="rb" style="left:65px;top:298.5px;width:495px;height:53px"></div>
</div>
<div class="trk" style="left:1228px;top:55px;width:16px;height:402px"></div>
<svg class="i" style="left:1232px;top:60px" width="8" height="7" viewBox="0 0 8 7" ><path d="M0.2 5.8L4 1.7L7.8 5.8Z" fill="#505050"/></svg>
<svg class="i" style="left:1232px;top:444px" width="8" height="7" viewBox="0 0 8 7" ><path d="M0.2 1.7L4 5.8L7.8 1.7Z" fill="#505050"/></svg>
<div class="vth" style="left:1228px;top:153px;width:15px;height:285px"></div><div class="grip" style="left:1232px;top:291px;width:8px;height:1px"></div><div class="grip" style="left:1232px;top:294px;width:8px;height:1px"></div><div class="grip" style="left:1232px;top:297px;width:8px;height:1px"></div>
<div style="position:absolute;left:1244px;top:55px;width:15px;height:418px;background:#fafafa"></div>
<div style="position:absolute;left:1246px;top:137px;width:7px;height:3px;border:1px solid #f6dcae;background:#fdf8ee"></div>
<div style="position:absolute;left:1246px;top:151px;width:7px;height:3px;border:1px solid #f6dcae;background:#fdf8ee"></div>
<div style="position:absolute;left:1246px;top:165px;width:7px;height:3px;border:1px solid #dcdcdc;background:#f6f6f6"></div>
<div style="position:absolute;left:1246px;top:299px;width:7px;height:3px;border:1px solid #f6dcae;background:#fdf8ee"></div>
<div style="position:absolute;left:350px;top:457px;width:42px;height:16px;background:#f9f9f9"></div>
<div class="trk" style="left:392px;top:457px;width:852px;height:16px"></div>
<svg class="i" style="left:396px;top:461.5px" width="8" height="7" viewBox="0 0 8 7" ><path d="M5.4 -0.3L1.4 3.5L5.4 7.3Z" fill="#606060"/></svg>
<svg class="i" style="left:1215px;top:461.5px" width="8" height="7" viewBox="0 0 8 7" ><path d="M1.6 -0.3L5.6 3.5L1.6 7.3Z" fill="#9a9a9a"/></svg>
<div class="panel" style="left:349px;top:481px;width:912px;height:135px;border-color:#d4d9ea"></div>
<div class="tabbar" style="left:350px;top:482px;width:910px;height:24px"></div>
<div class="atab" style="left:350px;top:482px;width:84px;height:24px;border-radius:10px 8px 0 0;background:linear-gradient(#dfe8f5,#fff)"></div>
<svg class="i" style="left:356px;top:487px" width="14" height="14" viewBox="0 0 14 14" ><rect x="1" y="1" width="12" height="9" rx="1.2" fill="#fff" stroke="#2b4fa3" stroke-width="1.6"/><path d="M3.5 4H8.5M3.5 6.3H7" stroke="#3d5fae" stroke-width="1"/><path d="M5 10.5H9V12H5Z" fill="#2b4fa3"/><path d="M2.5 12.8H11.5" stroke="#2b4fa3" stroke-width="1.6"/></svg>
<div class="t " style="left:374px;top:487px;">Con...</div>
<svg class="i" style="left:415px;top:489px" width="11" height="11" viewBox="0 0 11 11" ><path d="M0.6 2.2L2.2 0.6L5.5 3.6L8.8 0.6L10.4 2.2L7.4 5.5L10.4 8.8L8.8 10.4L5.5 7.4L2.2 10.4L0.6 8.8L3.6 5.5Z" fill="#fff" stroke="#4a4a4a" stroke-width="1" stroke-linejoin="round"/></svg>
<svg class="i" style="opacity:.72;left:438px;top:486px" width="15" height="16" viewBox="0 0 15 16" ><rect x="0.5" y="0.5" width="13" height="14.5" fill="#f3f0e6" stroke="#c9c5b4"/><circle cx="6" cy="4.6" r="2.6" fill="#e2665f"/><path d="M2.5 14.5V10.8C2.5 9.8 3.3 9.2 4.3 9.2H7.7C8.7 9.2 9.5 9.8 9.5 10.8V14.5Z" fill="#f6d48a" stroke="#d3a84f" stroke-width="0.8"/><path d="M11 2.5V12.5M9.3 11L11 13L12.7 11" fill="none" stroke="#b5bccb" stroke-width="1"/></svg>
<div class="t g" style="left:458px;top:487px;">Mar...</div>
<svg class="i" style="opacity:.72;left:506px;top:488px" width="14" height="13" viewBox="0 0 14 13" ><rect x="0.5" y="0.5" width="13" height="11.5" fill="#fff" stroke="#9a9a9a"/><path d="M0.5 3H13.5" stroke="#9a9a9a" stroke-width="1.4"/><path d="M4.5 3V12M1 6H13M1 9H13" stroke="#cfcfcf" stroke-width="1"/></svg>
<div class="t g" style="left:525px;top:487px;">Pro...</div>
<svg class="i" style="opacity:.72;left:570px;top:488px" width="14" height="13" viewBox="0 0 14 13" ><path d="M2.5 0.5V12.5M6.8 0.5V12.5M11 0.5V12.5" stroke="#8e8e8e" stroke-width="1"/><path d="M0.5 5.5H5M9 8.5H13.5" stroke="#c79a3c" stroke-width="1.3"/><circle cx="6.8" cy="4" r="1.9" fill="#e8e1c7" stroke="#8a8466" stroke-width="0.9"/><circle cx="2.5" cy="8.2" r="1.7" fill="#e8e1c7" stroke="#8a8466" stroke-width="0.9"/><circle cx="11" cy="6.4" r="1.7" fill="#e8e1c7" stroke="#8a8466" stroke-width="0.9"/></svg>
<div class="t g" style="left:588px;top:487px;">Ser...</div>
<svg class="i" style="opacity:.72;left:630px;top:486px" width="16" height="16" viewBox="0 0 16 16" ><path d="M0.5 2.5L4 0.8L8 2.5L11.5 0.8V12.5L8 14.5L4 12.5L0.5 14.5Z" fill="#b8d59a" stroke="#7a9d5d" stroke-width="0.9"/><path d="M4 0.8V12.5M8 2.5V14.5" stroke="#86a86b" stroke-width="0.8"/><rect x="8.5" y="6.5" width="7" height="8.5" fill="#f8eecb" stroke="#8e8258" stroke-width="0.9"/><path d="M8.5 9.3H15.5M8.5 12H15.5" stroke="#8e8258" stroke-width="0.9"/></svg>
<div class="t g" style="left:650px;top:487px;">Data...</div>
<svg class="i" style="opacity:.72;left:697px;top:487px" width="14" height="15" viewBox="0 0 14 15" ><rect x="2.5" y="2.5" width="11" height="11.5" fill="#fff" stroke="#8e9cc0"/><path d="M5 6.5H11M5 9H11M5 11.5H9" stroke="#d08a8a" stroke-width="1"/><path d="M0.5 5V0.5H5M0.8 0.8L5 5" fill="none" stroke="#4a64a8" stroke-width="1.1"/></svg>
<div class="t g" style="left:715px;top:487px;">Sni...</div>
<svg class="i" style="opacity:.72;left:757px;top:486px" width="15" height="16" viewBox="0 0 15 16" ><rect x="1.5" y="0.5" width="12.5" height="14.5" fill="#f3f0e6" stroke="#c9c5b4"/><circle cx="7.5" cy="4.6" r="2.6" fill="#e2665f"/><path d="M11.5 2.5V12.5M9.8 11L11.5 13L13.2 11" fill="none" stroke="#b5bccb" stroke-width="1"/><path d="M4.3 8.2L8.3 15.3H0.4Z" fill="#f7d27a" stroke="#c8922c" stroke-width="0.9" stroke-linejoin="round"/><path d="M4.3 10.5V13" stroke="#5a3c05" stroke-width="1"/></svg>
<div class="t g" style="left:777px;top:487px;">Pro...</div>
<svg class="i" style="opacity:.72;left:821px;top:489px" width="16" height="12" viewBox="0 0 16 12" ><rect x="0.5" y="0.5" width="12" height="3.5" fill="#c9d3c9" stroke="#8e9a8e" stroke-width="0.9"/><rect x="0.5" y="5.5" width="8" height="3" fill="#c9d3c9" stroke="#8e9a8e" stroke-width="0.9"/><circle cx="11.3" cy="8" r="3.6" fill="#56b356" stroke="#3a8a3a" stroke-width="0.8"/><path d="M10.2 6.2V9.8L13.2 8Z" fill="#fff"/></svg>
<div class="t g" style="left:840px;top:487px;">Pro...</div>
<svg class="i" style="opacity:.72;left:884px;top:487px" width="15" height="15" viewBox="0 0 15 15" ><path d="M1 14L3.2 9.5L10 2.5C11 1.5 12.4 1.5 13.2 2.3C14 3.1 13.8 4.4 13 5.3L6 12Z" fill="#f4e3ae" stroke="#c8a85a" stroke-width="0.9"/><path d="M9 3.5L12 6.5" stroke="#b9b9b9" stroke-width="1.6"/><path d="M1 14L2 11.8L3.2 13Z" fill="#555"/></svg>
<div class="t g" style="left:903px;top:487px;">Sea...</div>
<svg class="i" style="opacity:.72;left:948px;top:487px" width="11" height="15" viewBox="0 0 11 15" ><path d="M1.5 0.5V13.5" stroke="#8e8e8e" stroke-width="1.2"/><path d="M2 4.5H5M2 10.5H5" stroke="#8e8e8e" stroke-width="1"/><rect x="4.5" y="1.5" width="5.5" height="5.5" fill="#f1e3c6" stroke="#b98a62" stroke-width="0.9"/><rect x="4.5" y="8.5" width="5.5" height="5.5" fill="#f1e3c6" stroke="#b98a62" stroke-width="0.9"/><path d="M7.2 1.5V7M4.5 4.2H10M7.2 8.5V14M4.5 11.2H10" stroke="#b98a62" stroke-width="0.7"/></svg>
<div class="t g" style="left:965px;top:487px;">Pac...</div>
<svg class="i" style="opacity:.72;left:1008px;top:485px" width="17" height="17" viewBox="0 0 17 17" ><rect x="0.8" y="8.8" width="6" height="6.4" fill="#dff2df" stroke="#3f9a50" stroke-width="1.3"/><path d="M4 8.5V3.5H8" fill="none" stroke="#3f9a50" stroke-width="1.4"/><path d="M10 4.5V10.5C10 12.5 13.5 12.5 13.5 10.5V4.5" fill="none" stroke="#cc4a5a" stroke-width="1.5"/><path d="M11.8 0.5V4.5M9.9 1.5L13.7 3.5M13.7 1.5L9.9 3.5" stroke="#7d89a8" stroke-width="0.8"/></svg>
<div class="t g" style="left:1029px;top:487px;font-weight:bold;color:#7a7a86">JU...</div>
<svg class="i" style="opacity:.72;left:1069px;top:486px" width="16" height="16" viewBox="0 0 16 16" ><ellipse cx="8" cy="9" rx="3.2" ry="4.2" fill="#cfe5cf" stroke="#6f9a7a" stroke-width="1"/><circle cx="8" cy="4.2" r="1.6" fill="#cfe5cf" stroke="#6f9a7a" stroke-width="0.9"/><path d="M5 7L1.5 4.5M11 7L14.5 4.5M4.8 9.5H1M11.2 9.5H15M5.2 12L2 14.5M10.8 12L14 14.5M6.8 2.8L5.5 0.8M9.2 2.8L10.5 0.8" stroke="#8aa592" stroke-width="0.9"/></svg>
<div class="t g" style="left:1089px;top:487px;">Deb...</div>
<svg class="i" style="opacity:.72;left:1133px;top:486px" width="16" height="16" viewBox="0 0 16 16" ><path d="M0.5 3H6M0.5 13H6M6 8H10" stroke="#9aa39a" stroke-width="0.9"/><path d="M3.5 0.8V5.2M3.5 10.8V15.2" stroke="#9aa39a" stroke-width="0.9"/><circle cx="8" cy="3" r="2" fill="#9fd3a6" stroke="#5fa06a" stroke-width="0.8"/><circle cx="12.5" cy="8" r="2" fill="#9fd3a6" stroke="#5fa06a" stroke-width="0.8"/><circle cx="8" cy="13" r="2" fill="#9fd3a6" stroke="#5fa06a" stroke-width="0.8"/></svg>
<div class="t g" style="left:1154px;top:487px;">Call ...</div>
<div style="position:absolute;left:1212px;top:488px;width:8px;height:2px;border:1px solid #6a6a6a;background:#fff;box-sizing:content-box"></div><div style="position:absolute;left:1235px;top:488px;width:8px;height:8px;border:1px solid #5c5c5c;background:linear-gradient(#fff 0,#fff 1px,#5c5c5c 1px,#5c5c5c 2px,#fff 2px);box-sizing:content-box"></div>
<div style="position:absolute;left:350px;top:506px;width:910px;height:100px;background:#fff"></div>
<svg class="i" style="left:955px;top:514px" width="11" height="11" viewBox="0 0 11 11" ><rect x="0.5" y="0.5" width="10" height="10" rx="1.6" fill="#bcbcbc" stroke="#a3a3a3"/><path d="M1.5 9.5V1.5H9.5" fill="none" stroke="#d2d2d2" stroke-width="1"/></svg>
<svg class="i" style="left:976px;top:512px" width="15" height="15" viewBox="0 0 15 15" ><path d="M3 3L12 12M12 3L3 12" stroke="#5a5a5a" stroke-width="4" stroke-linecap="round"/><path d="M3 3L12 12M12 3L3 12" stroke="#767676" stroke-width="2.6" stroke-linecap="round"/></svg>
<svg class="i" style="left:998px;top:510px" width="17" height="17" viewBox="0 0 17 17" ><path d="M2.5 2.5L9.5 9.5M9.5 2.5L2.5 9.5" stroke="#8f8f8f" stroke-width="3.4" stroke-linecap="round"/><path d="M2.5 2.5L9.5 9.5M9.5 2.5L2.5 9.5" stroke="#dcdcdc" stroke-width="2" stroke-linecap="round"/><path d="M6.5 7L14.0 14.5M14.0 7L6.5 14.5" stroke="#5a5a5a" stroke-width="3.8" stroke-linecap="round"/><path d="M6.5 7L14.0 14.5M14.0 7L6.5 14.5" stroke="#767676" stroke-width="2.4" stroke-linecap="round"/></svg>
<div style="position:absolute;left:1020px;top:510px;width:1px;height:18px;background:#8e8e8e"></div>
<svg class="i" style="left:1030px;top:511px" width="16" height="16" viewBox="0 0 16 16" ><path d="M0.5 0.5H7.5L10.5 3.5V13.5H0.5Z" fill="#fff" stroke="#8e8e8e"/><path d="M2.5 4H7M2.5 6.2H8.5M2.5 8.4H8.5M2.5 10.6H6" stroke="#4b6fb8" stroke-width="1"/><path d="M8.5 9L14.5 15M14.5 9L8.5 15" stroke="#6a6a6a" stroke-width="2.2"/></svg>
<div style="position:absolute;left:1049px;top:509px;width:23px;height:20px;box-sizing:border-box;border:1px solid #7c7c7c;border-radius:4px;background:linear-gradient(#e3e3e3,#f3f3f3);box-shadow:inset 0 1px 1px #c2c2c2"></div>
<svg class="i" style="left:1053px;top:512px" width="16" height="15" viewBox="0 0 16 15" ><rect x="0.5" y="0.5" width="14.5" height="13.5" fill="#fff" stroke="#6d7fa8"/><rect x="10" y="1" width="4.5" height="12.5" fill="#dfe6f5"/><rect x="11" y="2.5" width="2.5" height="2.5" fill="#4a66a8"/><rect x="11" y="6.5" width="2.5" height="2.5" fill="#4a66a8"/><rect x="11" y="10.5" width="2.5" height="2" fill="#4a66a8"/><rect x="2" y="7.5" width="7" height="6" rx="0.8" fill="#f0b64a" stroke="#b47a16" stroke-width="0.9"/><path d="M3.6 7.5V5.6C3.6 3.4 7.4 3.4 7.4 5.6V7.5" fill="none" stroke="#b47a16" stroke-width="1.3"/></svg>
<svg class="i" style="left:1076px;top:512px" width="16" height="15" viewBox="0 0 16 15" ><path d="M0.5 0.5H8L10.5 3V12.5H0.5Z" fill="#fff" stroke="#8e8e8e"/><path d="M2.5 3.5H7M2.5 5.7H8M2.5 7.9H6" stroke="#4b6fb8" stroke-width="1"/><path d="M13.5 2.5V8.5C13.5 10 12.8 10.5 11.5 10.5H8.5V8L4.8 11.3L8.5 14.5V12.3H12C14 12.3 15.3 11.2 15.3 9V2.5Z" fill="#f8dc8c" stroke="#c39a3a" stroke-width="0.8" stroke-linejoin="round"/></svg>
<div style="position:absolute;left:1095px;top:509px;width:23px;height:20px;box-sizing:border-box;border:1px solid #7c7c7c;border-radius:4px;background:linear-gradient(#e3e3e3,#f3f3f3);box-shadow:inset 0 1px 1px #c2c2c2"></div>
<svg class="i" style="left:1099px;top:512px" width="16" height="15" viewBox="0 0 16 15" ><rect x="3.5" y="0.8" width="11.5" height="8.5" rx="1" fill="#fff" stroke="#2b4fa3" stroke-width="1.5"/><path d="M6 3.6H12.5M6 6H11" stroke="#3d5fae" stroke-width="1"/><rect x="0.8" y="5.8" width="6.5" height="5" fill="#7db2ea" stroke="#2b4fa3" stroke-width="1"/><path d="M3.2 11V13M1.2 13.8H6.6" stroke="#2b4fa3" stroke-width="1.3"/></svg>
<svg class="i" style="left:1123px;top:512px" width="16" height="15" viewBox="0 0 16 15" ><rect x="3.5" y="0.8" width="11.5" height="8.5" rx="1" fill="#fff" stroke="#2b4fa3" stroke-width="1.3"/><path d="M6 2.8L9.5 6.8M9.5 2.8L6 6.8" stroke="#d92b2b" stroke-width="1.7"/><path d="M11 3.6H13M11 6H13" stroke="#3d5fae" stroke-width="1"/><rect x="0.8" y="5.8" width="6.5" height="5" fill="#7db2ea" stroke="#2b4fa3" stroke-width="1"/><path d="M3.2 11V13M1.2 13.8H6.6" stroke="#2b4fa3" stroke-width="1.3"/></svg>
<div style="position:absolute;left:1143px;top:510px;width:1px;height:18px;background:#8e8e8e"></div>
<svg class="i" style="left:1154px;top:511px" width="16" height="16" viewBox="0 0 16 16" ><rect x="0.8" y="4.8" width="12.5" height="10" fill="#fff" stroke="#2b4fa3" stroke-width="1.2"/><path d="M0.8 6H13.3" stroke="#2b4fa3" stroke-width="2.2"/><path d="M6.5 11.5L10 8" stroke="#555" stroke-width="1.1"/><circle cx="11.8" cy="4" r="3" fill="#3fa64c" stroke="#247a30" stroke-width="0.8"/><path d="M8.5 6.5L11.5 9.3" stroke="#247a30" stroke-width="1.6"/></svg>
<svg class="i" style="left:1178px;top:512px" width="14" height="15" viewBox="0 0 14 15" ><rect x="1" y="0.8" width="12" height="9.5" rx="1.2" fill="#fff" stroke="#8a8a8a" stroke-width="1.5"/><path d="M3.5 4H9.5M3.5 6.5H8" stroke="#a5a5a5" stroke-width="1"/><path d="M5 10.5H9V12.3H5Z" fill="#8a8a8a"/><path d="M2.5 13.3H11.5" stroke="#8a8a8a" stroke-width="1.5"/></svg>
<svg class="i" style="left:1200px;top:517px" width="8" height="5" viewBox="0 0 8 5" ><path d="M0.3 0.5H7.7L4 4.6Z" fill="#808080"/></svg>
<svg class="i" style="left:1216px;top:510px" width="17" height="17" viewBox="0 0 17 17" ><rect x="0.8" y="4.8" width="12.5" height="10.5" fill="#fff" stroke="#2b4fa3" stroke-width="1.2"/><path d="M0.8 6H13.3" stroke="#2b4fa3" stroke-width="2.2"/><path d="M1.5 15H13" stroke="#e4c36a" stroke-width="1.3"/><path d="M12.5 0.5L14 3.5L16.5 5L14 6.5L12.5 9.5L11 6.5L8.5 5L11 3.5Z" fill="#fbe9a2" stroke="#c99a2a" stroke-width="0.9" stroke-linejoin="round"/></svg>
<svg class="i" style="left:1239px;top:517px" width="9" height="5" viewBox="0 0 9 5" ><path d="M0.3 0.5H8.7L4.5 4.8Z" fill="#111"/></svg>
<div class="t" style="left:354px;top:531px;font-size:13px;letter-spacing:-0.1px;word-spacing:0.6px">&lt;terminated&gt; BaiduWeather2DBCase.bdWeather2PG [JUnit] D:\Program Files\Java\jre1.8.0_171\bin\javaw.exe (2025<span style="font-size:12px">年</span>8<span style="font-size:12px">月</span>10<span style="font-size:12px">日</span> <span style="font-size:12px">下午</span>11:04:49)</div>
<div style="position:absolute;left:352px;top:547px;width:905px;height:1px;background:#828790"></div>
<div id="con" style="position:absolute;left:352px;top:548px;width:889px;height:42px;overflow:hidden;background:#fff">
<div class="m" style="left:2px;top:-12px"><span class="cc" style="letter-spacing:1.5px">请求完成</span> <span class="cc" style="letter-spacing:1.5px">耗时统计，解析响应数据，打印结果</span>......</div>
<div class="m" style="left:2px;top:9px">rsp===&gt;com.burukeyou.uniapi.http.core.response.UniHttpResponse@7828bc6b</div>
<div class="m" style="left:2px;top:28px">{"status":0,"result":{"location":{"country":"<span class="cc">中国</span>","province":"<span class="cc">湖南省</span>","city":"<span class="cc">张家界市</span>","name":"<span class="cc">武陵源</span>","id":"430811"},"now":{"text":"<span class="cc">多云</span>"</div>
</div>
<div class="trk" style="left:1241px;top:548px;width:16px;height:42px"></div>
<svg class="i" style="left:1245.5px;top:554.5px" width="8" height="7" viewBox="0 0 8 7" ><path d="M0.2 5.8L4 1.7L7.8 5.8Z" fill="#505050"/></svg>
<svg class="i" style="left:1245.5px;top:577px" width="8" height="7" viewBox="0 0 8 7" ><path d="M0.2 1.7L4 5.8L7.8 1.7Z" fill="#505050"/></svg>
<div class="trk" style="left:352px;top:590px;width:905px;height:16px"></div>
<svg class="i" style="left:356px;top:594px" width="8" height="7" viewBox="0 0 8 7" ><path d="M5.4 -0.3L1.4 3.5L5.4 7.3Z" fill="#505050"/></svg>
<svg class="i" style="left:1229px;top:594px" width="8" height="7" viewBox="0 0 8 7" ><path d="M1.6 -0.3L5.6 3.5L1.6 7.3Z" fill="#505050"/></svg>
<div class="hth" style="left:370px;top:590px;width:15px;height:15px"></div>
<div class="panel" style="left:1263px;top:4px;width:103px;height:610px;border-color:#e4e7f3"></div>
<div class="tabbar" style="left:1264px;top:5px;width:101px;height:25px"></div>
<div class="atab" style="left:1264px;top:5px;width:9px;height:25px;border-radius:9px 0 0 0;background:linear-gradient(90deg,#d9e4f3,#f4f5fb)"></div>
<div style="position:absolute;left:1264px;top:13px;width:1px;height:3px;background:#555"></div><div style="position:absolute;left:1264px;top:19px;width:1px;height:3px;background:#555"></div>
<div class="t" style="left:1280px;top:6px;font-size:16px;font-weight:bold;transform:scaleX(1.35);transform-origin:0 0">»</div>
<div class="t" style="left:1288px;top:14px;font-size:10.5px">2</div>
<div style="position:absolute;left:1317px;top:12px;width:8px;height:2px;border:1px solid #6a6a6a;background:#fff;box-sizing:content-box"></div><div style="position:absolute;left:1340px;top:12px;width:8px;height:8px;border:1px solid #5c5c5c;background:linear-gradient(#fff 0,#fff 1px,#5c5c5c 1px,#5c5c5c 2px,#fff 2px);box-sizing:content-box"></div>
<div style="position:absolute;left:1264px;top:30px;width:101px;height:580px;background:#fff"></div>
<div style="position:absolute;left:1272px;top:32px;width:85px;height:90px;background:#f4f5fb"></div>
<svg class="i" style="left:1276px;top:36px" width="15" height="15" viewBox="0 0 15 15" ><circle cx="4.5" cy="4.6" r="3.2" fill="#d6d6d6"/><circle cx="10.2" cy="6.2" r="3.4" fill="#d0d0d0"/><circle cx="5.2" cy="10.2" r="3.5" fill="#a9a9a9"/><path d="M2.2 9.8H8.2" stroke="#8a8a8a" stroke-width="1"/><path d="M7.5 5.4H13" stroke="#e6e6e6" stroke-width="1"/></svg>
<svg class="i" style="left:1299px;top:36px" width="15" height="15" viewBox="0 0 15 15" ><rect x="1.5" y="1.5" width="9" height="9" fill="#d6e1f1" stroke="#8da3cb"/><rect x="4.5" y="4.5" width="9" height="9" fill="#eef6f8" stroke="#7c93c0"/><path d="M6 9H12" stroke="#1d3f8f" stroke-width="1.7"/></svg>
<svg class="i" style="left:1320px;top:34px" width="18" height="18" viewBox="0 0 18 18" ><path d="M2.5 2V14" stroke="#3f6fad" stroke-width="1.1"/><path d="M0.6 11.8L2.5 15L4.4 11.8Z" fill="#3f6fad"/><text x="5.5" y="8.5" font-family="Liberation Serif,serif" font-size="13" font-weight="bold" fill="#1f8a70">a</text><text x="10.5" y="16" font-family="Liberation Serif,serif" font-size="13" font-weight="bold" fill="#9a2f9a">z</text></svg>
<svg class="i" style="left:1276px;top:58px" width="15" height="15" viewBox="0 0 15 15" ><circle cx="7.5" cy="8" r="5.6" fill="#3f8fe0" stroke="#2a6fc0" stroke-width="0.8"/><path d="M5 6H10M7.5 6V11" stroke="#fff" stroke-width="1.6"/><path d="M0.5 1L13.5 13" stroke="#1f2f8a" stroke-width="1.3"/></svg>
<svg class="i" style="left:1299px;top:56px" width="16" height="16" viewBox="0 0 16 16" ><circle cx="6.5" cy="10" r="3.6" fill="#9a9a9a"/><text x="9.5" y="7.5" font-family="Liberation Sans,sans-serif" font-size="8" font-weight="bold" fill="#2c5aa8">S</text><path d="M0.5 3.5L12 15" stroke="#1f2f8a" stroke-width="1.3"/></svg>
<svg class="i" style="left:1324px;top:60px" width="10" height="10" viewBox="0 0 10 10" ><circle cx="5" cy="5" r="3.7" fill="#4fa85a" stroke="#35873f" stroke-width="0.8"/><path d="M2.8 4.3H7.2" stroke="#86c98d" stroke-width="1.1"/></svg>
<svg class="i" style="left:1276px;top:78px" width="16" height="16" viewBox="0 0 16 16" ><circle cx="6.5" cy="10" r="3.6" fill="#9a9a9a"/><text x="10" y="7.5" font-family="Liberation Sans,sans-serif" font-size="8" font-weight="bold" fill="#2c5aa8">L</text><path d="M0.5 3.5L12 15" stroke="#1f2f8a" stroke-width="1.3"/></svg>
<svg class="i" style="left:1281px;top:106px" width="11" height="7" viewBox="0 0 11 7" ><path d="M0.8 0.7H10.2L5.5 5.8Z" fill="#fff" stroke="#555" stroke-width="1"/></svg>
<div id="otree" style="position:absolute;left:1272px;top:122px;width:90px;height:468px;overflow:hidden;background:#fff">
<svg class="i" style="left:22px;top:5px" width="13" height="13" viewBox="0 0 13 13" ><rect x="1" y="1" width="11" height="11" fill="#f3eed2" stroke="#8e8650" stroke-width="1"/><path d="M1 6.5H12M6.5 1V12" stroke="#8e8650" stroke-width="1"/></svg>
<div class="t" style="left:47px;top:3px">com.yelang.project.weather.domain</div>
<svg class="i" style="left:7px;top:28px" width="6" height="6" viewBox="0 0 6 6" ><path d="M5.5 0.7V5.5H0.7Z" fill="#595959" stroke="#262626"/></svg>
<svg class="i" style="left:21px;top:24px" width="14" height="14" viewBox="0 0 14 14" ><circle cx="6.8" cy="6.8" r="6.2" fill="#3f9a50" stroke="#2b7a3b" stroke-width="0.8"/><path d="M9.6 4.9C9 4 8.1 3.6 7 3.6C5.2 3.6 4 4.9 4 6.8C4 8.7 5.2 10 7 10C8.1 10 9 9.6 9.6 8.7" fill="none" stroke="#fff" stroke-width="1.6"/></svg>
<div class="t" style="left:47px;top:23px">WeatherInfoDTO</div>
<svg class="i" style="left:39px;top:47px" width="10" height="10" viewBox="0 0 10 10" ><circle cx="5" cy="5" r="3.8" fill="#4ea65a" stroke="#35873f" stroke-width="0.8"/><path d="M2.8 4.3H7.2" stroke="#86c98d" stroke-width="1.1"/></svg>
<div class="t" style="left:52px;top:40px;font-size:10px;line-height:10px;font-weight:bold;color:#2f8f3f">c</div>
<div class="t" style="left:63px;top:43px">WeatherInfoDTO()</div>
<svg class="i" style="left:39px;top:67px" width="10" height="10" viewBox="0 0 10 10" ><circle cx="5" cy="5" r="3.8" fill="#4ea65a" stroke="#35873f" stroke-width="0.8"/><path d="M2.8 4.3H7.2" stroke="#86c98d" stroke-width="1.1"/></svg>
<div class="t" style="left:52px;top:60px;font-size:10px;line-height:10px;font-weight:bold;color:#2f8f3f">c</div>
<div class="t" style="left:63px;top:63px">WeatherInfoDTO(WeatherNow, List)</div>
<svg class="i" style="left:39px;top:87px" width="10" height="10" viewBox="0 0 10 10" ><circle cx="5" cy="5" r="3.8" fill="#4ea65a" stroke="#35873f" stroke-width="0.8"/><path d="M2.8 4.3H7.2" stroke="#86c98d" stroke-width="1.1"/></svg>
<div class="t" style="left:63px;top:83px">setWeatherNow(WeatherNow)</div>
<svg class="i" style="left:39px;top:107px" width="10" height="10" viewBox="0 0 10 10" ><circle cx="5" cy="5" r="3.8" fill="#4ea65a" stroke="#35873f" stroke-width="0.8"/><path d="M2.8 4.3H7.2" stroke="#86c98d" stroke-width="1.1"/></svg>
<div class="t" style="left:63px;top:103px">setAlerts(List)</div>
<svg class="i" style="left:39px;top:127px" width="10" height="10" viewBox="0 0 10 10" ><circle cx="5" cy="5" r="3.8" fill="#4ea65a" stroke="#35873f" stroke-width="0.8"/><path d="M2.8 4.3H7.2" stroke="#86c98d" stroke-width="1.1"/></svg>
<div class="t" style="left:63px;top:123px">setIndexes(List)</div>
<svg class="i" style="left:39px;top:147px" width="10" height="10" viewBox="0 0 10 10" ><circle cx="5" cy="5" r="3.8" fill="#4ea65a" stroke="#35873f" stroke-width="0.8"/><path d="M2.8 4.3H7.2" stroke="#86c98d" stroke-width="1.1"/></svg>
<div class="t" style="left:63px;top:143px">setForecasts(List)</div>
<svg class="i" style="left:39px;top:167px" width="10" height="10" viewBox="0 0 10 10" ><circle cx="5" cy="5" r="3.8" fill="#4ea65a" stroke="#35873f" stroke-width="0.8"/><path d="M2.8 4.3H7.2" stroke="#86c98d" stroke-width="1.1"/></svg>
<div class="t" style="left:63px;top:163px">setForecastHours(List)</div>
<svg class="i" style="left:39px;top:187px" width="10" height="10" viewBox="0 0 10 10" ><circle cx="5" cy="5" r="3.8" fill="#4ea65a" stroke="#35873f" stroke-width="0.8"/><path d="M2.8 4.3H7.2" stroke="#86c98d" stroke-width="1.1"/></svg>
<div class="t" style="left:63px;top:183px">getWeatherNow()</div>
<svg class="i" style="left:39px;top:207px" width="10" height="10" viewBox="0 0 10 10" ><circle cx="5" cy="5" r="3.8" fill="#4ea65a" stroke="#35873f" stroke-width="0.8"/><path d="M2.8 4.3H7.2" stroke="#86c98d" stroke-width="1.1"/></svg>
<div class="t" style="left:63px;top:203px">getAlerts()</div>
<svg class="i" style="left:39px;top:227px" width="10" height="10" viewBox="0 0 10 10" ><circle cx="5" cy="5" r="3.8" fill="#4ea65a" stroke="#35873f" stroke-width="0.8"/><path d="M2.8 4.3H7.2" stroke="#86c98d" stroke-width="1.1"/></svg>
<div class="t" style="left:63px;top:223px">getIndexes()</div>
<svg class="i" style="left:39px;top:247px" width="10" height="10" viewBox="0 0 10 10" ><circle cx="5" cy="5" r="3.8" fill="#4ea65a" stroke="#35873f" stroke-width="0.8"/><path d="M2.8 4.3H7.2" stroke="#86c98d" stroke-width="1.1"/></svg>
<div class="t" style="left:63px;top:243px">getForecasts()</div>
<svg class="i" style="left:39px;top:267px" width="10" height="10" viewBox="0 0 10 10" ><circle cx="5" cy="5" r="3.8" fill="#4ea65a" stroke="#35873f" stroke-width="0.8"/><path d="M2.8 4.3H7.2" stroke="#86c98d" stroke-width="1.1"/></svg>
<div class="t" style="left:63px;top:263px">getForecastHours()</div>
<svg class="i" style="left:39px;top:287px" width="10" height="10" viewBox="0 0 10 10" ><circle cx="5" cy="5" r="3.8" fill="#4ea65a" stroke="#35873f" stroke-width="0.8"/><path d="M2.8 4.3H7.2" stroke="#86c98d" stroke-width="1.1"/></svg>
<svg class="i" style="left:51px;top:291px" width="8" height="6" viewBox="0 0 8 6" ><path d="M0.7 4.8L3.9 0.9L7.1 4.8Z" fill="#9fc49a" stroke="#5b3fb0" stroke-width="1"/></svg>
<div class="t" style="left:63px;top:283px">toString()</div>
<div style="position:absolute;left:42px;top:309px;width:2px;height:2px;border:1.5px solid #d23b55;background:#fff"></div>
<div class="t" style="left:45px;top:302px;font-size:9px;line-height:9px;color:#d03050">S</div>
<div class="t" style="left:53px;top:302px;font-size:9px;line-height:9px;color:#2c5a9a">F</div>
<div class="t" style="left:63px;top:303px">serialVersionUID : long</div>
<div style="position:absolute;left:42px;top:329px;width:2px;height:2px;border:1.5px solid #d23b55;background:#fff"></div>
<div class="t" style="left:63px;top:323px">weatherNow : WeatherNow</div>
<div style="position:absolute;left:42px;top:349px;width:2px;height:2px;border:1.5px solid #d23b55;background:#fff"></div>
<div class="t" style="left:63px;top:343px">alerts : List</div>
<div style="position:absolute;left:42px;top:369px;width:2px;height:2px;border:1.5px solid #d23b55;background:#fff"></div>
<div class="t" style="left:63px;top:363px">indexes : List</div>
<div style="position:absolute;left:42px;top:389px;width:2px;height:2px;border:1.5px solid #d23b55;background:#fff"></div>
<div class="t" style="left:63px;top:383px">forecasts : List</div>
<div class="sel" style="left:34px;top:401.5px;width:120px;height:19px"></div>
<div style="position:absolute;left:42px;top:409px;width:2px;height:2px;border:1.5px solid #d23b55;background:#fff"></div>
<div class="t" style="left:63px;top:403px">forecastHours : List</div>
</div>
<div class="trk" style="left:1267px;top:590px;width:95px;height:16px"></div>
<svg class="i" style="left:1271px;top:594px" width="8" height="7" viewBox="0 0 8 7" ><path d="M5.4 -0.3L1.4 3.5L5.4 7.3Z" fill="#505050"/></svg>
<svg class="i" style="left:1351px;top:594px" width="8" height="7" viewBox="0 0 8 7" ><path d="M1.6 -0.3L5.6 3.5L1.6 7.3Z" fill="#505050"/></svg>
<div class="hth" style="left:1285px;top:590px;width:15px;height:15px"></div>

</body></html>
